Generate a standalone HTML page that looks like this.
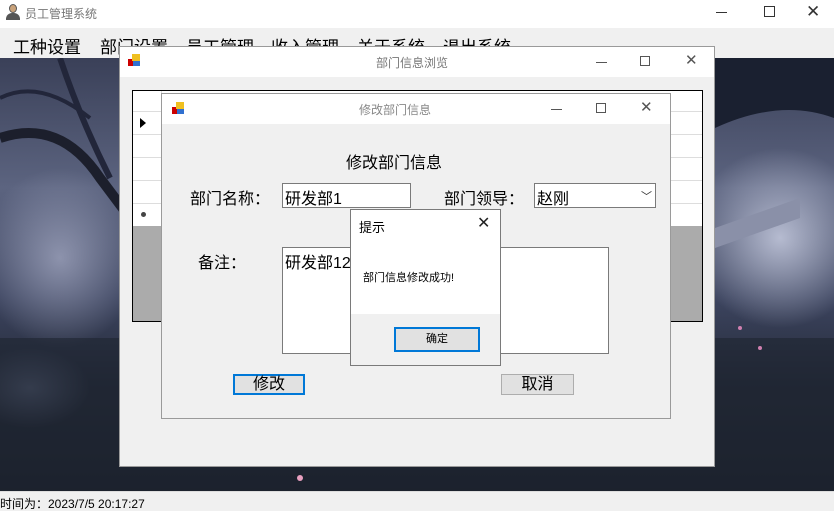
<!DOCTYPE html>
<html><head><meta charset="utf-8"><style>
*{margin:0;padding:0;box-sizing:border-box}
body{width:834px;height:511px;overflow:hidden;position:relative;background:#fff;font-family:"Liberation Sans","Noto Sans CJK SC","Microsoft YaHei",sans-serif;color:#000}
.abs{position:absolute}
.bg{left:0;top:58px;width:834px;height:433px;overflow:hidden;
background:
radial-gradient(ellipse 90px 90px at 780px 180px,rgba(200,205,225,.85),transparent),
radial-gradient(ellipse 80px 90px at 60px 200px,rgba(170,175,200,.7),transparent),
radial-gradient(ellipse 60px 40px at 30px 330px,rgba(120,130,160,.6),transparent),
linear-gradient(180deg,#3a4058 0%,#5c6480 30%,#3d4560 55%,#252b3a 75%,#1a1f2a 100%)}
.t{font-size:12px;color:#666}
.win{background:#f0f0f0;border:1px solid #9a9a9a}
.tb{position:absolute;left:0;top:0;right:0;height:30px;background:#fff}
.ctl{position:absolute;font-size:14px;color:#555}
.ic{position:absolute;width:13px;height:13px}
.ic i{position:absolute}
.lbl{position:absolute;font-size:16px;white-space:nowrap}
.box{position:absolute;background:#fff;border:1px solid #7a7a7a}
.btn{position:absolute;background:#e1e1e1;border:1px solid #adadad;font-size:16px;text-align:center}
.menu span{position:absolute;white-space:nowrap;top:0}
</style></head><body>
<div class="abs" style="left:6px;top:4px;width:14px;height:16px">
<div class="abs" style="left:3px;top:0;width:8px;height:9px;border-radius:50%;background:#c9a27a;border:1px solid #555"></div>
<div class="abs" style="left:0;top:9px;width:14px;height:7px;border-radius:6px 6px 0 0;background:#555"></div></div>
<div class="abs t" style="left:25px;top:5px;font-size:12px;color:#777">员工管理系统</div>
<div class="abs" style="left:716px;top:12px;width:11px;height:1px;background:#333"></div>
<div class="abs" style="left:764px;top:6px;width:11px;height:11px;border:1px solid #333"></div>
<div class="abs" style="left:806px;top:2px;font-size:17px;color:#333">✕</div>
<div class="abs" style="left:0;top:28px;width:834px;height:30px;background:#f0f0f0"></div>
<div class="abs menu" style="left:13px;top:33px;font-size:17px;width:600px;height:24px">
<span style="left:0">工种设置</span><span style="left:87px">部门设置</span><span style="left:173px">员工管理</span><span style="left:258px">收入管理</span><span style="left:344px">关于系统</span><span style="left:430px">退出系统</span></div>
<div class="abs bg">
<svg width="834" height="433" style="position:absolute;left:0;top:0">
<path d="M0 80 Q60 60 100 120 L130 160" stroke="#1c1f2c" stroke-width="10" fill="none"/>
<path d="M60 0 Q80 60 110 120" stroke="#22263a" stroke-width="6" fill="none"/>
<path d="M0 40 Q40 20 90 60" stroke="#22263a" stroke-width="4" fill="none"/>
<rect x="0" y="280" width="834" height="153" fill="#1e2430" opacity=".6"/>
<path d="M715 170 L800 140 L800 160 L715 190Z" fill="#8a90a8"/>
<path d="M715 0 L834 0 L834 60 Q780 40 715 70Z" fill="#1a2030"/>
<circle cx="300" cy="420" r="3" fill="#e8a0c0"/><circle cx="740" cy="270" r="2" fill="#d080b0"/><circle cx="760" cy="290" r="2" fill="#d080b0"/>
</svg></div>
<div class="abs" style="left:0;top:491px;width:834px;height:20px;background:#f0f0f0;border-top:1px solid #ddd"></div>
<div class="abs" style="left:0;top:495px;font-size:12px">时间为：2023/7/5 20:17:27</div>
<div class="abs win" style="left:119px;top:46px;width:596px;height:421px">
<div class="tb"></div>
<div class="ic" style="left:8px;top:7px"><i style="left:0;top:5px;width:5px;height:7px;background:#c00"></i><i style="left:4px;top:0;width:8px;height:7px;background:#f0c020"></i><i style="left:5px;top:7px;width:7px;height:5px;background:#3070d0"></i></div>
<div class="ctl" style="left:256px;top:7px;font-size:12px;color:#777">部门信息浏览</div>
<div class="abs" style="left:476px;top:15px;width:11px;height:1px;background:#555"></div>
<div class="abs" style="left:520px;top:9px;width:10px;height:10px;border:1px solid #555"></div>
<div class="ctl" style="left:565px;top:4px;font-size:15px">✕</div>
<div class="abs" style="left:12px;top:43px;width:571px;height:232px;background:#ababab;border:1px solid #000">
<div class="abs" style="left:0;top:0;width:569px;height:135px;background:#fff"></div>
<div class="abs" style="left:28px;top:0;width:1px;height:135px;background:#ddd"></div>
<div class="abs" style="left:0;top:20px;width:569px;height:1px;background:#ddd"></div>
<div class="abs" style="left:0;top:43px;width:569px;height:1px;background:#ddd"></div>
<div class="abs" style="left:0;top:66px;width:569px;height:1px;background:#ddd"></div>
<div class="abs" style="left:0;top:89px;width:569px;height:1px;background:#ddd"></div>
<div class="abs" style="left:0;top:112px;width:569px;height:1px;background:#ddd"></div>
<div class="abs" style="left:7px;top:27px;width:0;height:0;border-left:6px solid #000;border-top:5px solid transparent;border-bottom:5px solid transparent"></div>
<div class="abs" style="left:8px;top:121px;width:5px;height:5px;border-radius:50%;background:#444"></div>
</div></div>
<div class="abs win" style="left:161px;top:93px;width:510px;height:326px">
<div class="tb"></div>
<div class="ic" style="left:10px;top:8px"><i style="left:0;top:5px;width:5px;height:7px;background:#c00"></i><i style="left:4px;top:0;width:8px;height:7px;background:#f0c020"></i><i style="left:5px;top:7px;width:7px;height:5px;background:#3070d0"></i></div>
<div class="ctl" style="left:197px;top:7px;font-size:12px;color:#888">修改部门信息</div>
<div class="abs" style="left:389px;top:15px;width:11px;height:1px;background:#555"></div>
<div class="abs" style="left:434px;top:9px;width:10px;height:10px;border:1px solid #555"></div>
<div class="ctl" style="left:478px;top:4px;font-size:15px">✕</div>
<div class="lbl" style="left:184px;top:55px">修改部门信息</div>
<div class="lbl" style="left:28px;top:91px">部门名称：</div>
<div class="box" style="left:120px;top:89px;width:129px;height:25px"><span class="lbl" style="left:2px;top:1px">研发部1</span></div>
<div class="lbl" style="left:282px;top:91px">部门领导：</div>
<div class="box" style="left:372px;top:89px;width:122px;height:25px"><span class="lbl" style="left:2px;top:1px">赵刚</span><span class="abs" style="left:106px;top:4px;font-size:11px;color:#333">﹀</span></div>
<div class="lbl" style="left:36px;top:155px">备注：</div>
<div class="box" style="left:120px;top:153px;width:327px;height:107px"><span class="lbl" style="left:2px;top:1px">研发部12</span></div>
<div class="btn" style="left:71px;top:280px;width:72px;height:21px;border:2px solid #0078d7;line-height:17px">修改</div>
<div class="btn" style="left:339px;top:280px;width:73px;height:21px;line-height:19px">取消</div>
</div>
<div class="abs" style="left:350px;top:209px;width:151px;height:157px;background:#f0f0f0;border:1px solid #7a7a7a">
<div class="abs" style="left:0;top:0;width:149px;height:104px;background:#fff"></div>
<div class="abs" style="left:8px;top:7px;font-size:13px">提示</div>
<div class="abs" style="left:126px;top:3px;font-size:16px;color:#222">✕</div>
<div class="abs" style="left:12px;top:59px;font-size:11px">部门信息修改成功!</div>
<div class="abs" style="left:43px;top:117px;width:86px;height:25px;background:#e1e1e1;border:2px solid #0078d7;font-size:11px;text-align:center;line-height:21px">确定</div>
</div>
</body></html>
